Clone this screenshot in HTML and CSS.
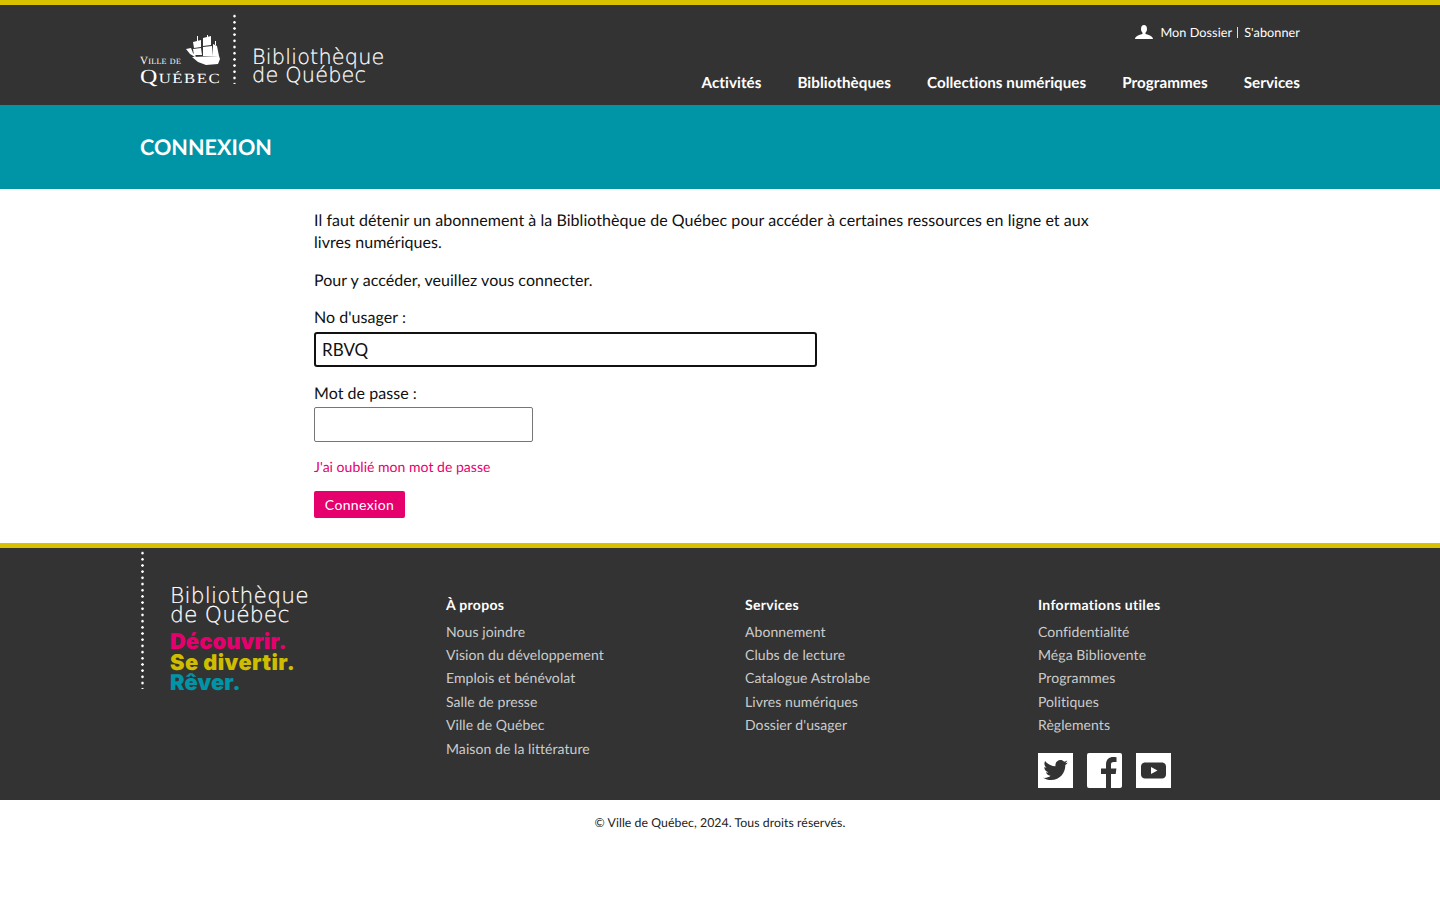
FILE: index.html
```html
<!DOCTYPE html>
<html lang="fr">
<head>
<meta charset="utf-8">
<title>Connexion - Bibliothèque de Québec</title>
<link rel="stylesheet" href="styles.css">
</head>
<body>
<header class="site-header">
  <div class="wrap header-inner">
    <a class="logo" href="#">
      <div class="vdq">
        <svg class="ship" viewBox="0 0 34 30" width="34" height="30" aria-hidden="true">
          <g fill="#fff">
            <path d="M7 6l8-2v7l-7 1zM7 13l8-1 1 7-8 0zM17 2l8-2v9l-8 1zM17 11l9-1 1 10-10 0zM27 8l4 2 2 10-6 0z"/>
            <path d="M6 21l27-1 1 3-2 5-12 1-8-3zM0 13l5-1 2 5 3 3-1 1-5-3z"/>
            <path d="M11 0h1v5h-1zM21-1h1v3h-1zM29 5h1v4h-1z"/>
          </g>
        </svg>
        <span class="vdq-small">Ville de</span>
        <span class="vdq-big">Québec</span>
      </div>
      <span class="dots dots-head"></span>
      <span class="bq bq-head"><span>Bibliothèque</span><span>de Québec</span></span>
    </a>
    <div class="header-right">
      <div class="account">
        <svg class="user" viewBox="0 0 18 14" width="18" height="14" aria-hidden="true"><path fill="#fff" d="M6 4c0-2.400 1.200-4 3-4s3 1.600 3 4c0 1.800-.8 3-1.500 3.700v1.300c2 .6 7.500 1.800 7.500 5H0c0-3.200 5.500-4.400 7.500-5V7.700C6.800 7 6 5.800 6 4z"/></svg>
        <a href="#">Mon Dossier</a><span class="sep"></span><a href="#">S'abonner</a>
      </div>
      <nav class="main-nav">
        <a href="#">Activités</a>
        <a href="#">Bibliothèques</a>
        <a href="#">Collections numériques</a>
        <a href="#">Programmes</a>
        <a href="#">Services</a>
      </nav>
    </div>
  </div>
</header>
<div class="banner"><div class="wrap"><h1>CONNEXION</h1></div></div>
<main class="content">
  <p>Il faut détenir un abonnement à la Bibliothèque de Québec pour accéder à certaines ressources en ligne et aux livres numériques.</p>
  <p>Pour y accéder, veuillez vous connecter.</p>
  <form class="login">
    <label for="user">No d'usager :</label>
    <input id="user" class="field field-user" type="text" value="RBVQ">
    <label for="pass">Mot de passe :</label>
    <input id="pass" class="field field-pass" type="password">
    <a class="forgot" href="#">J'ai oublié mon mot de passe</a>
    <button class="btn" type="button">Connexion</button>
  </form>
</main>
<footer class="site-footer">
  <div class="wrap footer-grid">
    <div class="foot-logo">
      <span class="dots dots-foot"></span>
      <div class="foot-brand">
        <span class="bq bq-foot"><span>Bibliothèque</span><span>de Québec</span></span>
        <div class="slogan">
          <span class="s-pink">Découvrir.</span>
          <span class="s-yellow">Se divertir.</span>
          <span class="s-teal">Rêver.</span>
        </div>
      </div>
    </div>
    <div class="foot-col">
      <h2>À propos</h2>
      <a href="#">Nous joindre</a>
      <a href="#">Vision du développement</a>
      <a href="#">Emplois et bénévolat</a>
      <a href="#">Salle de presse</a>
      <a href="#">Ville de Québec</a>
      <a href="#">Maison de la littérature</a>
    </div>
    <div class="foot-col">
      <h2>Services</h2>
      <a href="#">Abonnement</a>
      <a href="#">Clubs de lecture</a>
      <a href="#">Catalogue Astrolabe</a>
      <a href="#">Livres numériques</a>
      <a href="#">Dossier d'usager</a>
    </div>
    <div class="foot-col">
      <h2>Informations utiles</h2>
      <a href="#">Confidentialité</a>
      <a href="#">Méga Bibliovente</a>
      <a href="#">Programmes</a>
      <a href="#">Politiques</a>
      <a href="#">Règlements</a>
      <div class="social">
        <a class="soc" href="#" aria-label="Twitter"><svg viewBox="0 0 35 35" width="35" height="35"><path fill="#333" d="M30 9.500c-.9.400-1.900.700-2.900.800 1-.6 1.800-1.600 2.200-2.800-1 .6-2 1-3.200 1.200-.9-1-2.200-1.600-3.700-1.600-2.800 0-5 2.300-5 5 0 .4 0 .8.100 1.200-4.200-.2-7.900-2.200-10.400-5.300-.4.700-.7 1.600-.7 2.500 0 1.700.9 3.300 2.200 4.200-.8 0-1.600-.3-2.300-.6v.1c0 2.400 1.700 4.500 4 5-.4.100-.9.200-1.300.2-.3 0-.6 0-1-.1.700 2 2.500 3.400 4.700 3.500-1.700 1.300-3.900 2.100-6.200 2.100-.4 0-.8 0-1.200-.1 2.200 1.400 4.900 2.300 7.700 2.300 9.200 0 14.300-7.700 14.300-14.300v-.7c1-.7 1.800-1.600 2.500-2.600z"/></svg></a>
        <a class="soc soc-fb" href="#" aria-label="Facebook"><svg viewBox="0 0 35 35" width="35" height="35"><path fill="#333" d="M19 35V21h-5v-5.500h5v-4C19 6.700 22 4 26.200 4c1.600 0 2.800.1 3.300.2v4.800h-2.700c-2.300 0-2.800 1.100-2.800 2.700v3.800h5.400l-.7 5.500h-4.700v14z"/></svg></a>
        <a class="soc" href="#" aria-label="YouTube"><svg viewBox="0 0 35 35" width="35" height="35"><path fill="#333" d="M9 9.500h17c2 0 4 1.600 4 3.800v8.400c0 2.200-2 3.800-4 3.800H9c-2 0-4-1.600-4-3.800v-8.400c0-2.200 2-3.800 4-3.800z"/><path fill="#fff" d="M15 14l6.500 3.500L15 21z"/></svg></a>
      </div>
    </div>
  </div>
</footer>
<div class="copyright">© Ville de Québec, 2024. Tous droits réservés.</div>
</body>
</html>
```
FILE: styles.css
```css
* { box-sizing: border-box; }
html, body { margin: 0; padding: 0; }
body {
  font-family: "Lato", "Liberation Sans", sans-serif;
  color: #111;
  background: #fff;
  font-size: 16px;
  letter-spacing: .05px;
  line-height: 22px;
  text-rendering: geometricPrecision;
}
a { color: inherit; text-decoration: none; }
.wrap { width: 1160px; margin: 0 auto; }

.site-header { background: #333; border-top: 5px solid #d9c100; height: 105px; color: #fff; }
.header-inner { display: flex; justify-content: space-between; height: 100px; }
.logo { display: flex; align-items: flex-start; }
.vdq { position: relative; width: 80px; height: 100px; color: #fff; font-family: "Liberation Serif", serif; }
.ship { position: absolute; left: 46px; top: 31px; overflow: visible; }
.vdq-small { position: absolute; left: 0; top: 50px; font-size: 11px; line-height: 12px; font-variant: small-caps; white-space: nowrap; letter-spacing: .3px; }
.vdq-big { position: absolute; left: 0; top: 60px; font-size: 20px; line-height: 24px; font-variant: small-caps; white-space: nowrap; letter-spacing: 1.200px; transform: scaleX(1.2); transform-origin: left center; }
.dots { display: block; width: 3px; background-image: radial-gradient(circle, #fff 1.200px, transparent 1.400px); background-size: 3px 6.200px; background-repeat: repeat-y; }
.dots-head { height: 71px; margin: 8px 0 0 13px; }
.bq { font-family: "DejaVu Sans", sans-serif; font-weight: 200; color: #fff; white-space: nowrap; display: flex; flex-direction: column; letter-spacing: .2px; -webkit-text-stroke: .2px #fff; }
.bq-head { font-size: 20.800px; line-height: 17.500px; margin: 44px 0 0 16px; }
.header-right { display: flex; flex-direction: column; align-items: flex-end; }
.account { display: flex; align-items: center; font-size: 12.700px; line-height: 16px; margin-top: 19px; height: 16px; }
.user { margin-right: 7px; }
.sep { width: 1px; height: 11px; background: #ddd; margin: 0 6px 0 5px; }
.main-nav { display: flex; gap: 36px; margin-top: 32px; font-weight: 700; font-size: 15.200px; line-height: 22px; }

.banner { background: #0095a6; height: 84px; color: #fff; display: flex; align-items: center; }
.banner h1 { margin: -1px 0 0; font-size: 21.500px; line-height: 28px; font-weight: 700; }

.content { width: 812px; margin-left: 314px; padding-top: 21px; height: 354px; }
.content p { margin: 0 0 16px; }
.login { display: flex; flex-direction: column; align-items: flex-start; }
.login label { line-height: 22px; margin-top: -1px; }
.field { border: 1px solid #767676; border-radius: 2px; background: #fff; font-family: inherit; color: #111; padding: 0 7px; }
.field-user { width: 503px; height: 35px; border: 2px solid #111; border-radius: 3px; font-size: 17px; margin: 3px 0 17px; padding: 0 6px; }
.field-pass { width: 219px; height: 35px; margin: 2px 0 15px; }
.forgot { color: #e5006d; font-size: 14px; line-height: 20px; letter-spacing: .03px; }
.btn { margin-top: 14px; width: 91px; height: 27px; padding: 0; border: 0; border-radius: 2px; background: #e5006d; color: #fff; font-family: inherit; font-size: 14px; letter-spacing: .35px; }

.site-footer { background: #333; border-top: 5px solid #d9c100; height: 257px; color: #ccc; }
.footer-grid { display: grid; grid-template-columns: 306px 299px 293px 262px; height: 252px; }
.foot-logo { display: flex; align-items: flex-start; }
.dots-foot { height: 139px; margin: 2px 0 0 1px; }
.foot-brand { margin-left: 26px; }
.bq-foot { font-size: 21.800px; line-height: 18.500px; margin-top: 40px; }
.slogan { display: flex; flex-direction: column; margin-top: 7px; font-family: "Inter", sans-serif; font-weight: 900; font-size: 21.800px; line-height: 20.500px; white-space: nowrap; letter-spacing: .1px; }
.s-pink { color: #e5006d; }
.s-yellow { color: #cfbd00; letter-spacing: .4px; }
.s-teal { color: #0095a6; }
.foot-col { display: flex; flex-direction: column; align-items: flex-start; padding-top: 45px; font-size: 14px; letter-spacing: .07px; }
.foot-col h2 { margin: 0 0 3.500px; font-size: 14px; line-height: 23px; font-weight: 700; color: #fff; letter-spacing: .3px; }
.foot-col > a { line-height: 23.400px; }
.social { display: flex; gap: 14px; margin-top: 16.500px; }
.soc { display: block; width: 35px; height: 35px; background: #fff; }
.soc svg { display: block; }
.soc-fb { border-radius: 2px; }

.copyright { text-align: center; font-size: 12.300px; line-height: 16px; padding-top: 15px; color: #222; }
```
